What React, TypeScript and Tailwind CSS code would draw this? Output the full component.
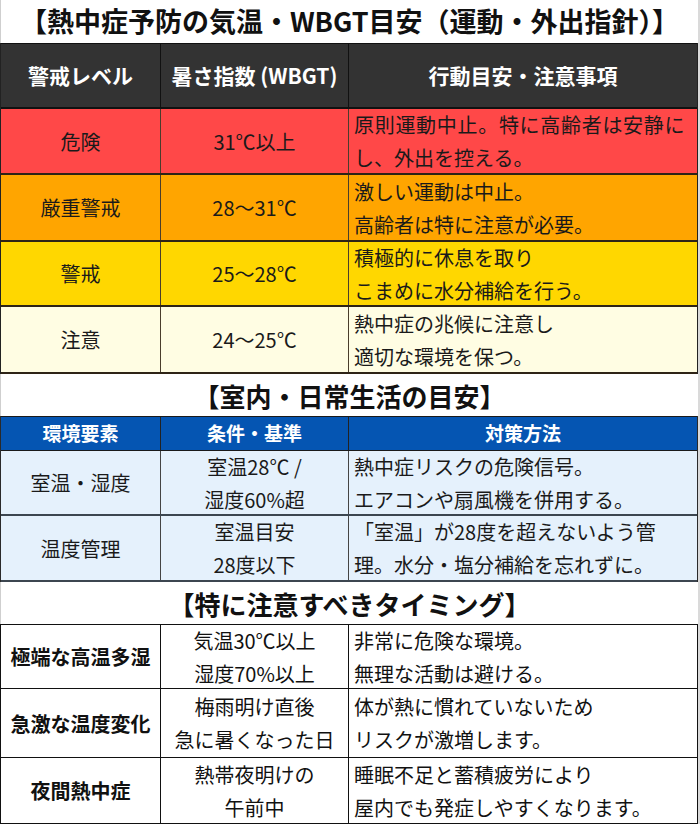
import React from "react";

type Cell = { lines: string[]; align?: "center" | "left"; bold?: boolean; spread?: boolean[] };

const FONT = "font-['Noto_Sans_CJK_JP',sans-serif]";

function renderText(s: string) {
  const parts = s.split("℃");
  const out: React.ReactNode[] = [];
  parts.forEach((p, i) => {
    out.push(<React.Fragment key={`t${i}`}>{p}</React.Fragment>);
    if (i < parts.length - 1) {
      out.push(
        <span key={`c${i}`} className="font-['Noto_Sans_CJK_SC',sans-serif] [font-feature-settings:'fwid']">
          ℃
        </span>
      );
    }
  });
  return out;
}

function CellBox({ cell, className }: { cell: Cell; className: string }) {
  const left = cell.align === "left";
  return (
    <div
      className={`${className} flex flex-col justify-center ${left ? "items-start pl-[5px]" : "items-center text-center"} ${cell.bold ? "font-bold" : ""}`}
    >
      {cell.lines.map((l, i) => (
        <div
          key={i}
          className={`leading-[33px] whitespace-nowrap ${cell.spread && cell.spread[i] ? "tracking-[0.7px]" : ""}`}
        >
          {renderText(l)}
        </div>
      ))}
    </div>
  );
}

function Title({ text, size }: { text: string; size: "lg" | "md" }) {
  return (
    <div
      className={`flex items-center justify-center font-bold text-[#111] bg-white border-l border-[#cfcfcf] ${size === "lg" ? "text-[27px] h-[43px]" : "text-[26px] h-[42px]"}`}
    >
      {text}
    </div>
  );
}

const t1Rows: { bg: string; h: string; cells: Cell[] }[] = [
  {
    bg: "bg-[#ff4848]",
    h: "h-[66px]",
    cells: [
      { lines: ["危険"] },
      { lines: ["31℃以上"] },
      { lines: ["原則運動中止。特に高齢者は安静に", "し、外出を控える。"], align: "left", spread: [true, false] },
    ],
  },
  {
    bg: "bg-[#ffa500]",
    h: "h-[67px]",
    cells: [
      { lines: ["厳重警戒"] },
      { lines: ["28～31℃"] },
      { lines: ["激しい運動は中止。", "高齢者は特に注意が必要。"], align: "left" },
    ],
  },
  {
    bg: "bg-[#ffd700]",
    h: "h-[65px]",
    cells: [
      { lines: ["警戒"] },
      { lines: ["25～28℃"] },
      { lines: ["積極的に休息を取り", "こまめに水分補給を行う。"], align: "left" },
    ],
  },
  {
    bg: "bg-[#fffde3]",
    h: "h-[67px]",
    cells: [
      { lines: ["注意"] },
      { lines: ["24～25℃"] },
      { lines: ["熱中症の兆候に注意し", "適切な環境を保つ。"], align: "left" },
    ],
  },
];

const t2Rows: { h: string; cells: Cell[] }[] = [
  {
    h: "h-[65px]",
    cells: [
      { lines: ["室温・湿度"] },
      { lines: ["室温28℃ /", "湿度60%超"] },
      { lines: ["熱中症リスクの危険信号。", "エアコンや扇風機を併用する。"], align: "left" },
    ],
  },
  {
    h: "h-[66px]",
    cells: [
      { lines: ["温度管理"] },
      { lines: ["室温目安", "28度以下"] },
      { lines: ["「室温」が28度を超えないよう管", "理。水分・塩分補給を忘れずに。"], align: "left" },
    ],
  },
];

const t3Rows: { h: string; cells: Cell[] }[] = [
  {
    h: "h-[64px]",
    cells: [
      { lines: ["極端な高温多湿"], bold: true },
      { lines: ["気温30℃以上", "湿度70%以上"] },
      { lines: ["非常に危険な環境。", "無理な活動は避ける。"], align: "left" },
    ],
  },
  {
    h: "h-[69px]",
    cells: [
      { lines: ["急激な温度変化"], bold: true },
      { lines: ["梅雨明け直後", "急に暑くなった日"] },
      { lines: ["体が熱に慣れていないため", "リスクが激増します。"], align: "left" },
    ],
  },
  {
    h: "h-[66px]",
    cells: [
      { lines: ["夜間熱中症"], bold: true },
      { lines: ["熱帯夜明けの", "午前中"] },
      { lines: ["睡眠不足と蓄積疲労により", "屋内でも発症しやすくなります。"], align: "left" },
    ],
  },
];

export default function App() {
  return (
    <div className={`${FONT} w-[700px] h-[825px] bg-white overflow-hidden`}>
      <div className="w-[698px] border-r-2 border-[#dadada] box-content">
        <Title text="【熱中症予防の気温・WBGT目安（運動・外出指針）】" size="lg" />

        {/* Table 1 */}
        <div className="border-l border-r border-[#222] text-[20px] text-[#1a1a1a]">
          <div className="h-[66px] flex bg-[#333333] text-white font-bold text-[21px] border-t border-b-2 border-[#111]">
            <div className="w-[160px] border-r border-[#111] flex items-center justify-center">警戒レベル</div>
            <div className="w-[188px] border-r border-[#111] flex items-center justify-center">暑さ指数 (WBGT)</div>
            <div className="flex-1 flex items-center justify-center">行動目安・注意事項</div>
          </div>
          {t1Rows.map((r, i) => (
            <div key={i} className={`${r.h} ${r.bg} flex border-b-2 border-[#2e2416]`}>
              <CellBox cell={r.cells[0]} className="w-[160px] border-r border-[#4a3d2c]" />
              <CellBox cell={r.cells[1]} className="w-[188px] border-r border-[#4a3d2c]" />
              <CellBox cell={r.cells[2]} className="flex-1 min-w-0" />
            </div>
          ))}
        </div>

        <Title text="【室内・日常生活の目安】" size="md" />

        {/* Table 2 */}
        <div className="border-l border-r border-[#2a2a2a] text-[20px] text-[#1a1a1a]">
          <div className="h-[35px] flex bg-[#0555b2] text-white font-bold text-[19px] border-t border-b border-[#1a1a1a]">
            <div className="w-[160px] border-r border-[#222] flex items-center justify-center">環境要素</div>
            <div className="w-[188px] border-r border-[#222] flex items-center justify-center">条件・基準</div>
            <div className="flex-1 flex items-center justify-center">対策方法</div>
          </div>
          {t2Rows.map((r, i) => (
            <div key={i} className={`${r.h} bg-[#e5f1fc] flex border-b-2 border-[#3c4650]`}>
              <CellBox cell={r.cells[0]} className="w-[160px] border-r border-[#444]" />
              <CellBox cell={r.cells[1]} className="w-[188px] border-r border-[#444]" />
              <CellBox cell={r.cells[2]} className="flex-1 min-w-0" />
            </div>
          ))}
        </div>

        <Title text="【特に注意すべきタイミング】" size="md" />

        {/* Table 3 */}
        <div className="border-l border-r border-t border-[#111] text-[20px] text-[#111]">
          {t3Rows.map((r, i) => (
            <div key={i} className={`${r.h} bg-white flex border-b border-[#111]`}>
              <CellBox cell={r.cells[0]} className="w-[160px] border-r border-[#111]" />
              <CellBox cell={r.cells[1]} className="w-[188px] border-r border-[#111]" />
              <CellBox cell={r.cells[2]} className="flex-1 min-w-0" />
            </div>
          ))}
        </div>
      </div>
    </div>
  );
}
